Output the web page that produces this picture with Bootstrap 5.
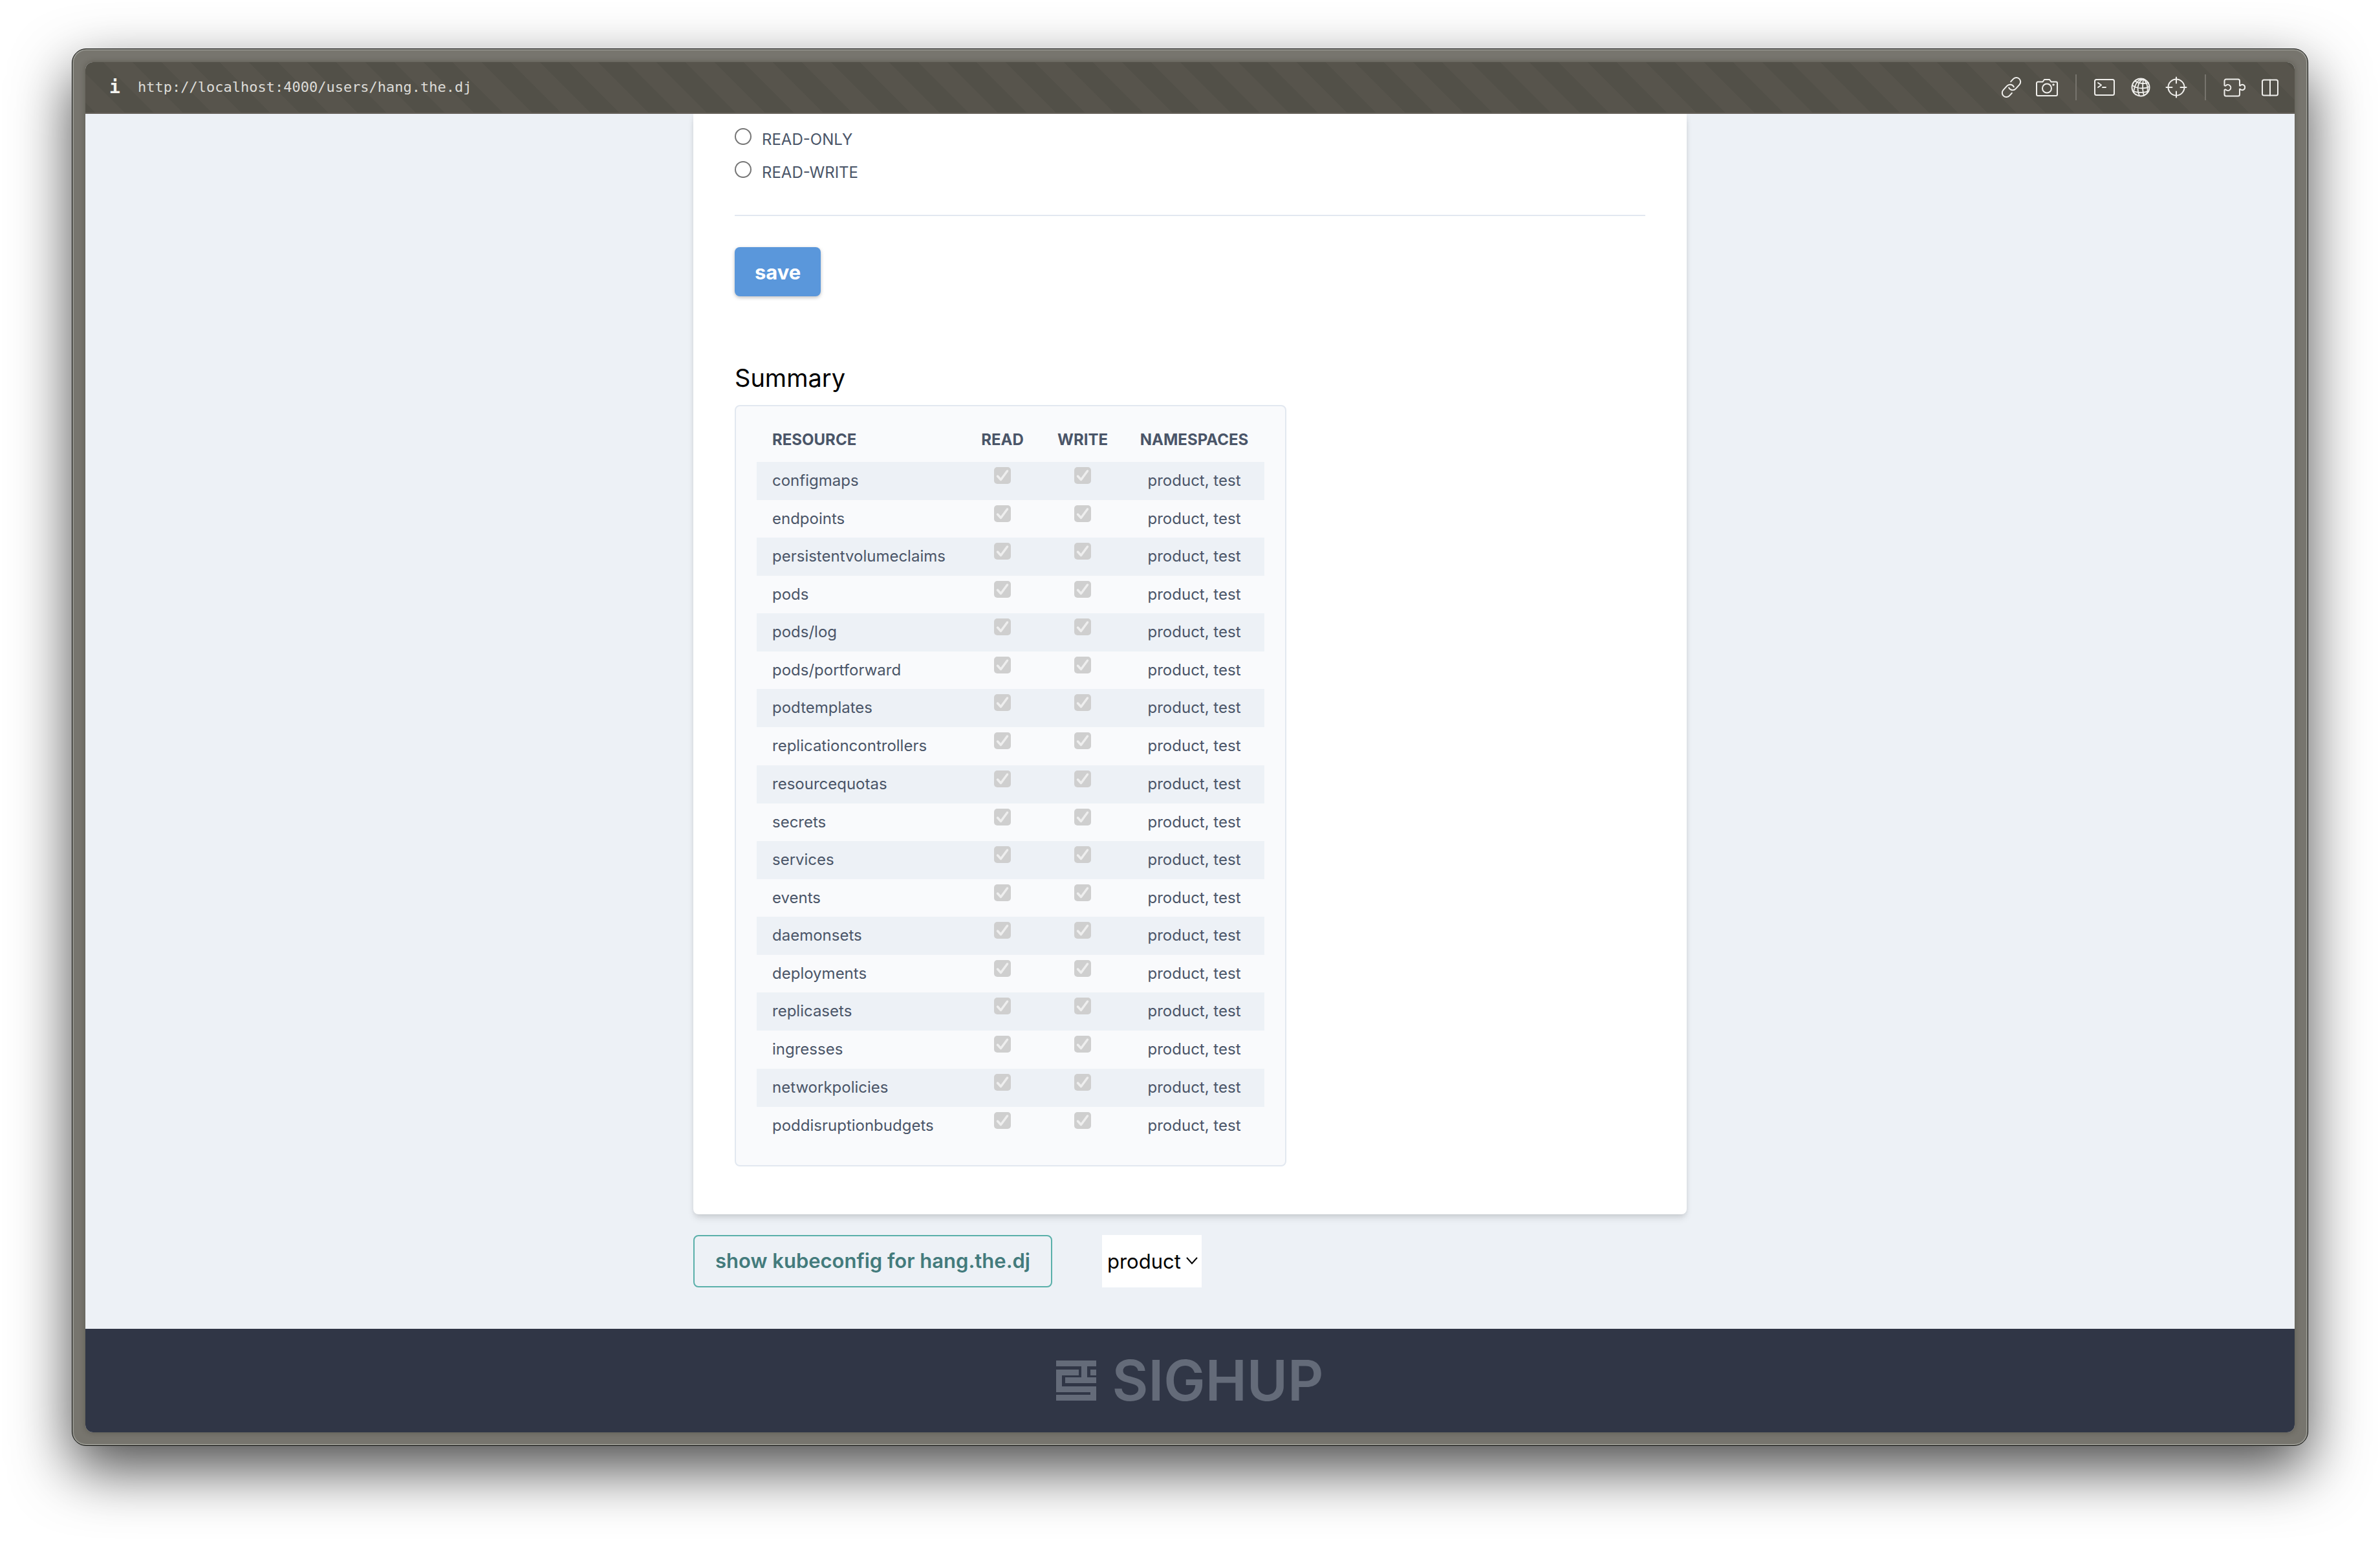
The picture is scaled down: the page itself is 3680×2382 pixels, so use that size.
<!DOCTYPE html>
<html lang="en">
<head>
<meta charset="utf-8">
<meta name="viewport" content="width=device-width, initial-scale=1">
<title>hang.the.dj</title>
<link href="https://cdn.jsdelivr.net/npm/bootstrap@5.3.0/dist/css/bootstrap.min.css" rel="stylesheet">
<style>
  body { min-height: 100vh; padding: 75px 111px 147px; background: #fff; font-family: Inter, "Liberation Sans", sans-serif; color: #4a5568; }
  .browser-frame { border: 1px solid #0c0d0b; border-radius: 22px; padding: 20px; background: #77756e; box-shadow: inset 0 0 0 2px #95958e, 0 36px 90px rgba(0,0,0,.7); }
  .browser-view { border-radius: 12px; background: #edf1f6; box-shadow: 0 0 8px rgba(60,55,45,.45); }
  .url-bar { height: 80px; padding: 0 21px 0 37px; border-bottom: 2px solid #645f58; color: #efeeeb;
    background: linear-gradient(45deg, #525048 25%, #57544c 25% 50%, #525048 50% 75%, #57544c 75%) 73px 0 / 90px 90px; }
  .url-bar, .url-bar a { font-family: "DejaVu Sans Mono", "Liberation Mono", monospace; font-size: 22px; line-height: 32px; }
  .url-bar a { color: #dddcd8; }
  .info-mark { width: 44px; font-size: 28px; font-weight: 700; color: #f4f3f0; }
  .tools { gap: 21px; }
  .tools button { width: 34px; height: 34px; color: #f0efec; }
  .tools svg { width: 34px; height: 34px; fill: none; stroke: currentColor; stroke-width: 2; stroke-linecap: round; stroke-linejoin: round; display: block; }
  .tool-rule { width: 2px; height: 40px; margin: 0 6px; background: #77746d; }
  .page-column { width: 1536px; max-width: 100%; }
  .panel { padding: 22px 64px 74px; border-radius: 0 0 8px 8px; box-shadow: 0 8px 12px -2px rgba(0,0,0,.1), 0 4px 8px -2px rgba(0,0,0,.06), 0 0 8px rgba(0,0,0,.05); }
  .choice { gap: 16px; margin-bottom: 15px; font-size: 24px; line-height: 36px; }
  .choice .form-check-input { width: 26px; height: 26px; border: 2px solid #757575; }
  .rule { height: 2px; margin: 47px 0 48px; background: #e2e8f0; opacity: 1; border: 0; }
  .btn-save { height: 76px; padding: 2px 31px 0; border: 0; border-radius: 8px; background: #5a97db; color: #fff; font-size: 31px; font-weight: 700; box-shadow: 0 2px 6px rgba(0,0,0,.18), 0 2px 4px rgba(0,0,0,.08); }
  .btn-save:hover { background: #4a88ce; color: #fff; }
  h2 { margin: 102px 0 18px; font-size: 38px; line-height: 48px; font-weight: 400; color: #000; }
  .summary-box { width: 853px; padding: 32px; border: 2px solid #e2e8f0; border-radius: 8px; background: #f9fafc; }
  .resources { width: 100%; table-layout: fixed; font-size: 24px; line-height: 36px; color: #4a5568; }
  .resources th { height: 54px; padding: 2px 0 0; font-size: 24px; font-weight: 700; vertical-align: top; text-align: center; }
  .resources td { height: 58px; padding: 11px 0 0; vertical-align: top; text-align: center; }
  .resources th:first-child, .resources td:first-child { padding-left: 24px; text-align: left; }
  .resources tbody tr:nth-child(odd) { background: #edf1f6; }
  .resources tbody tr:nth-child(odd) td, .resources tbody tr:nth-child(8n) td { height: 59px; }
  .resources td:nth-child(2), .resources td:nth-child(3) { padding-top: 8px; }
  .resources .form-check-input { display: block; width: 26px; height: 26px; margin: 0 auto; border: 0; border-radius: 5px; opacity: 1; background-color: #cfcfcf;
    background-image: url("data:image/svg+xml,%3csvg xmlns='http://www.w3.org/2000/svg' viewBox='0 0 26 26'%3e%3cpath d='M5.500 14l5 5.500L20.500 6' fill='none' stroke='%23eeeeee' stroke-width='3.500' stroke-linecap='round' stroke-linejoin='round'/%3e%3c/svg%3e"); }
  .c-res { width: 320px; } .c-read { width: 120px; } .c-write { width: 128px; }
  .actions { gap: 77px; margin: 32px 0 64px; }
  .btn-kube { height: 81px; padding: 0 32px; border: 2px solid #5ab0aa; border-radius: 8px; color: #437b7c; font-size: 31px; font-weight: 600; }
  .ns-select { width: 154px; height: 81px; padding: 2px 0 0 8px; border: 0; background: #fff; color: #000; font-size: 31px; appearance: none; }
  .ns-arrow { right: 6px; top: 34px; width: 18px; height: 12px; pointer-events: none; }
  footer { height: 160px; gap: 24px; background: #303646; color: #646b79; }
  .brand-word { font-size: 86px; line-height: 160px; font-weight: 600; }
</style>
<script src="https://cdn.jsdelivr.net/npm/bootstrap@5.3.0/dist/js/bootstrap.bundle.min.js" defer></script>
</head>
<body class="d-flex flex-column">
<div class="browser-frame d-flex flex-column flex-grow-1">
 <div class="browser-view d-flex flex-column flex-grow-1 overflow-hidden">
  <header class="url-bar d-flex align-items-center flex-shrink-0">
    <span class="info-mark">i</span>
    <a class="text-decoration-none me-auto" href="#">http://localhost:4000/users/hang.the.dj</a>
    <div class="tools d-flex align-items-center">
      <button class="btn p-0 border-0" type="button" aria-label="Copy link"><svg viewBox="0 0 34 34"><g transform="rotate(-48 17 17)"><path d="M11 23.500H5.500a6.500 6.500 0 0 1 0-13H14a6.500 6.500 0 0 1 6 9"/><path d="M23 10.500h5.500a6.500 6.500 0 0 1 0 13H20a6.500 6.500 0 0 1-6-9"/></g></svg></button>
      <button class="btn p-0 border-0" type="button" aria-label="Screenshot"><svg viewBox="0 0 34 34"><path d="M3 8.500h7.500l2.500-3.500h8l2.500 3.500H31a2 2 0 0 1 2 2V28a2 2 0 0 1-2 2H3a2 2 0 0 1-2-2V10.500a2 2 0 0 1 2-2z"/><circle cx="17" cy="18.500" r="7"/><circle cx="27" cy="13" r="1.200" fill="currentColor" stroke-width="1"/></svg></button>
      <span class="tool-rule"></span>
      <button class="btn p-0 border-0" type="button" aria-label="Console"><svg viewBox="0 0 34 34"><rect x="1" y="5" width="30" height="24" rx="2.500"/><path d="M6 10l5 3.500-5 3.500M13 17h5"/></svg></button>
      <button class="btn p-0 border-0" type="button" aria-label="Network"><svg viewBox="0 0 34 34"><circle cx="17" cy="17" r="13.500"/><path d="M21 4C13 8 10 19 15 30M21 4c-1 8-2 18 1 25M21 4c5 4 8 12 6 21M21 4C15 4 8 9 6 25M8 7c5 4 14 5 21 3M4 14c7 5 19 6 26 2M5 23c6 2 17 3 24 0" stroke-width="1.800"/></svg></button>
      <button class="btn p-0 border-0" type="button" aria-label="Inspect"><svg viewBox="0 0 34 34"><circle cx="17" cy="17" r="12.500"/><path d="M17 1.500v9M17 23.500v9M1.500 17h9M23.500 17h9"/></svg></button>
      <span class="tool-rule"></span>
      <button class="btn p-0 border-0" type="button" aria-label="Extensions"><svg viewBox="0 0 34 34"><path d="M1.500 14V7a2.500 2.500 0 0 1 2.500-2.500h18.500A2.500 2.500 0 0 1 25 7v7.500c1 0 1.500-.5 2-1.200a4.200 4.200 0 1 1 0 7.400c-.5-.7-1-1.200-2-1.200V28a2.500 2.500 0 0 1-2.500 2.500H4A2.500 2.500 0 0 1 1.500 28v-7c.5-.8 1.500-.8 2.200-.2a4.500 4.500 0 1 0 0-6.600c-.7.600-1.700.6-2.200-.2z"/></svg></button>
      <button class="btn p-0 border-0" type="button" aria-label="Split view"><svg viewBox="0 0 34 34"><rect x="5" y="5.500" width="24" height="24" rx="2.500"/><path d="M17 5.500v24"/></svg></button>
    </div>
  </header>
  <main class="flex-grow-1 overflow-hidden">
   <div class="page-column mx-auto">
    <section class="panel bg-white">
      <form>
        <div class="choice d-flex"><input class="form-check-input m-0" type="radio" name="access" id="ro"><label for="ro">READ-ONLY</label></div>
        <div class="choice d-flex mb-0"><input class="form-check-input m-0" type="radio" name="access" id="rw"><label for="rw">READ-WRITE</label></div>
        <hr class="rule">
        <button class="btn btn-save d-block" type="button">save</button>
      </form>
      <h2>Summary</h2>
      <div class="summary-box">
        <table class="resources">
          <colgroup><col class="c-res"><col class="c-read"><col class="c-write"><col></colgroup>
          <thead><tr><th>RESOURCE</th><th>READ</th><th>WRITE</th><th>NAMESPACES</th></tr></thead>
          <tbody>
            <tr><td>configmaps</td><td><input class="form-check-input" type="checkbox" aria-label="read configmaps" checked disabled></td><td><input class="form-check-input" type="checkbox" aria-label="write configmaps" checked disabled></td><td>product, test</td></tr>
            <tr><td>endpoints</td><td><input class="form-check-input" type="checkbox" aria-label="read endpoints" checked disabled></td><td><input class="form-check-input" type="checkbox" aria-label="write endpoints" checked disabled></td><td>product, test</td></tr>
            <tr><td>persistentvolumeclaims</td><td><input class="form-check-input" type="checkbox" aria-label="read persistentvolumeclaims" checked disabled></td><td><input class="form-check-input" type="checkbox" aria-label="write persistentvolumeclaims" checked disabled></td><td>product, test</td></tr>
            <tr><td>pods</td><td><input class="form-check-input" type="checkbox" aria-label="read pods" checked disabled></td><td><input class="form-check-input" type="checkbox" aria-label="write pods" checked disabled></td><td>product, test</td></tr>
            <tr><td>pods/log</td><td><input class="form-check-input" type="checkbox" aria-label="read pods/log" checked disabled></td><td><input class="form-check-input" type="checkbox" aria-label="write pods/log" checked disabled></td><td>product, test</td></tr>
            <tr><td>pods/portforward</td><td><input class="form-check-input" type="checkbox" aria-label="read pods/portforward" checked disabled></td><td><input class="form-check-input" type="checkbox" aria-label="write pods/portforward" checked disabled></td><td>product, test</td></tr>
            <tr><td>podtemplates</td><td><input class="form-check-input" type="checkbox" aria-label="read podtemplates" checked disabled></td><td><input class="form-check-input" type="checkbox" aria-label="write podtemplates" checked disabled></td><td>product, test</td></tr>
            <tr><td>replicationcontrollers</td><td><input class="form-check-input" type="checkbox" aria-label="read replicationcontrollers" checked disabled></td><td><input class="form-check-input" type="checkbox" aria-label="write replicationcontrollers" checked disabled></td><td>product, test</td></tr>
            <tr><td>resourcequotas</td><td><input class="form-check-input" type="checkbox" aria-label="read resourcequotas" checked disabled></td><td><input class="form-check-input" type="checkbox" aria-label="write resourcequotas" checked disabled></td><td>product, test</td></tr>
            <tr><td>secrets</td><td><input class="form-check-input" type="checkbox" aria-label="read secrets" checked disabled></td><td><input class="form-check-input" type="checkbox" aria-label="write secrets" checked disabled></td><td>product, test</td></tr>
            <tr><td>services</td><td><input class="form-check-input" type="checkbox" aria-label="read services" checked disabled></td><td><input class="form-check-input" type="checkbox" aria-label="write services" checked disabled></td><td>product, test</td></tr>
            <tr><td>events</td><td><input class="form-check-input" type="checkbox" aria-label="read events" checked disabled></td><td><input class="form-check-input" type="checkbox" aria-label="write events" checked disabled></td><td>product, test</td></tr>
            <tr><td>daemonsets</td><td><input class="form-check-input" type="checkbox" aria-label="read daemonsets" checked disabled></td><td><input class="form-check-input" type="checkbox" aria-label="write daemonsets" checked disabled></td><td>product, test</td></tr>
            <tr><td>deployments</td><td><input class="form-check-input" type="checkbox" aria-label="read deployments" checked disabled></td><td><input class="form-check-input" type="checkbox" aria-label="write deployments" checked disabled></td><td>product, test</td></tr>
            <tr><td>replicasets</td><td><input class="form-check-input" type="checkbox" aria-label="read replicasets" checked disabled></td><td><input class="form-check-input" type="checkbox" aria-label="write replicasets" checked disabled></td><td>product, test</td></tr>
            <tr><td>ingresses</td><td><input class="form-check-input" type="checkbox" aria-label="read ingresses" checked disabled></td><td><input class="form-check-input" type="checkbox" aria-label="write ingresses" checked disabled></td><td>product, test</td></tr>
            <tr><td>networkpolicies</td><td><input class="form-check-input" type="checkbox" aria-label="read networkpolicies" checked disabled></td><td><input class="form-check-input" type="checkbox" aria-label="write networkpolicies" checked disabled></td><td>product, test</td></tr>
            <tr><td>poddisruptionbudgets</td><td><input class="form-check-input" type="checkbox" aria-label="read poddisruptionbudgets" checked disabled></td><td><input class="form-check-input" type="checkbox" aria-label="write poddisruptionbudgets" checked disabled></td><td>product, test</td></tr>
          </tbody>
        </table>
      </div>
    </section>
    <div class="actions d-flex">
      <button class="btn btn-kube" type="button">show kubeconfig for hang.the.dj</button>
      <div class="position-relative">
        <select class="ns-select d-block" aria-label="Namespace"><option>product</option><option>test</option></select>
        <svg class="ns-arrow position-absolute" viewBox="0 0 18 12" fill="none" stroke="#000" stroke-width="2"><path d="M1 1l8 9 8-9"/></svg>
      </div>
    </div>
   </div>
  </main>
  <footer class="d-flex align-items-center justify-content-center flex-shrink-0">
    <svg width="62" height="62" viewBox="0 0 62 62" fill="currentColor" aria-hidden="true"><path d="M0 0h62v9H48v17h14v9H14v-9h25V9H0zM53 14h9v9h-9zM0 14h35v9H9v17h53v22H0v-9h53v-4H0z"/></svg>
    <span class="brand-word">SIGHUP</span>
  </footer>
 </div>
</div>
</body>
</html>
